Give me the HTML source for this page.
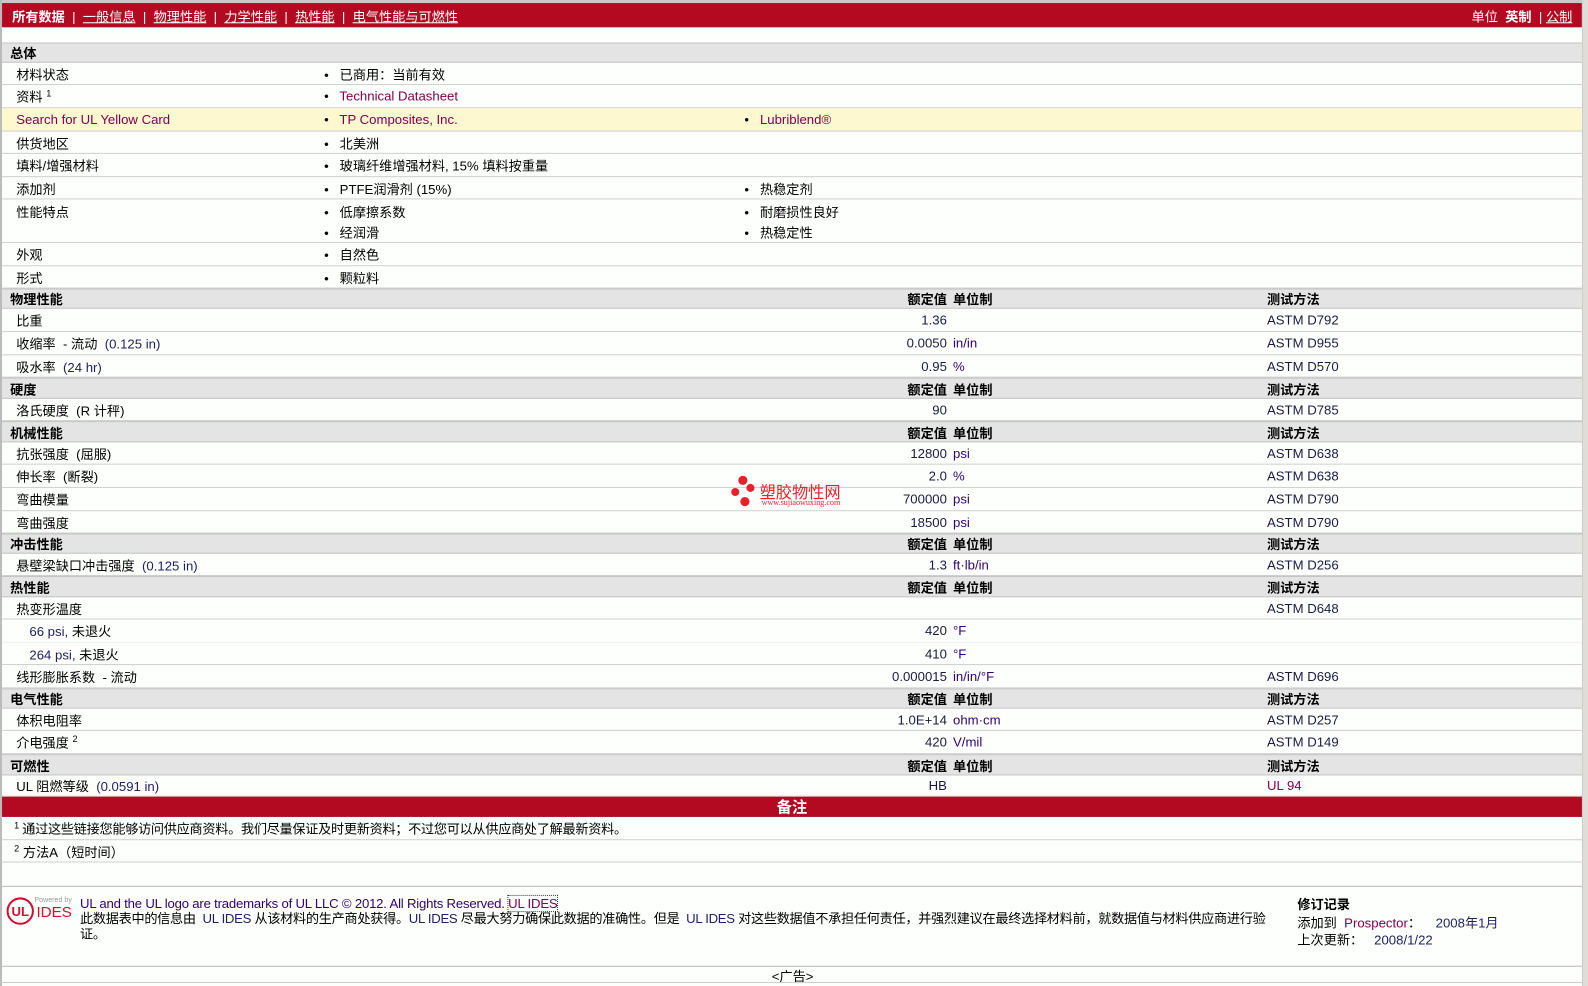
<!DOCTYPE html>
<html><head><meta charset="utf-8"><style>
*{margin:0;padding:0;box-sizing:border-box}
body{width:1588px;height:986px;background:#fdfffd;overflow:hidden;margin:0}
#w{width:1568px;height:974px;position:relative;transform:scale(1.01276,1.01232);transform-origin:0 0;font-family:"Liberation Sans","Noto Sans CJK SC",sans-serif;font-size:13px;color:#000}
.a{position:absolute;white-space:nowrap}
.r{position:absolute;left:2px;width:1560px;border-bottom:1px solid #cfcfcf}
.h{background:#e4e4e4;border-top:1px solid #c4c4c4;border-bottom:1px solid #c4c4c4;font-weight:bold}
.r span{position:absolute;white-space:nowrap;top:50%;transform:translateY(-50%)}
.l{left:14px}.hl{left:8px}
.b1{left:318px}.b2{left:733px}
.v{right:627px;text-align:right;color:#1a1a40}
.u{left:939px;color:#300070}
.t{left:1249px;color:#1a1a40}
.k{color:#800050}
.n{color:#202060}
.hv{right:627px}.hu{left:939px}.ht{left:1249px}
.cj{letter-spacing:-0.3px}
</style></head><body><div id="w">
<div class="a" style="left:0;top:0;width:1562px;height:3px;background:#c8c8c8"></div>
<div class="a" style="left:2px;top:3px;width:1560px;height:24px;background:#b30a22"></div>
<div class="a" style="left:12px;top:6px;color:#fff;font-size:13px"><b>所有数据</b> &nbsp;| &nbsp;<u>一般信息</u> &nbsp;| &nbsp;<u>物理性能</u> &nbsp;| &nbsp;<u>力学性能</u> &nbsp;| &nbsp;<u>热性能</u> &nbsp;| &nbsp;<u>电气性能与可燃性</u></div>
<div class="a" style="left:1453px;top:6px;color:#fff;font-size:13px">单位 &nbsp;<b>英制</b> &nbsp;| <u>公制</u></div>
<div class="a" style="left:0;top:0;width:2px;height:974px;background:#bbb"></div>
<div class="a" style="left:1562px;top:0;width:6px;height:974px;background:#e0ddd8;border-left:1px solid #ccc"></div>

<div class="r h" style="top:42px;height:20px"><span class="hl">总体</span></div>
<div class="r" style="top:62px;height:22px"><span class="l">材料状态</span><span class="b1">•&nbsp;&nbsp; 已商用：当前有效</span></div>
<div class="r" style="top:84px;height:23px"><span class="l">资料 <sup style="font-size:9px">1</sup></span><span class="b1">•&nbsp;&nbsp; <span class="k" style="position:static;transform:none">Technical Datasheet</span></span></div>
<div class="r" style="top:107px;height:23px;background:#fdf8d0"><span class="l k">Search for UL Yellow Card</span><span class="b1">•&nbsp;&nbsp; <span class="k" style="position:static;transform:none">TP Composites, Inc.</span></span><span class="b2">•&nbsp;&nbsp; <span class="k" style="position:static;transform:none">Lubriblend®</span></span></div>
<div class="r" style="top:130px;height:22px"><span class="l">供货地区</span><span class="b1">•&nbsp;&nbsp; 北美洲</span></div>
<div class="r" style="top:152px;height:23px"><span class="l">填料/增强材料</span><span class="b1">•&nbsp;&nbsp; 玻璃纤维增强材料, 15% 填料按重量</span></div>
<div class="r" style="top:175px;height:22px"><span class="l">添加剂</span><span class="b1">•&nbsp;&nbsp; PTFE润滑剂 (15%)</span><span class="b2">•&nbsp;&nbsp; 热稳定剂</span></div>
<div class="r" style="top:197px;height:43px"><span class="l" style="top:12px">性能特点</span><span class="b1" style="top:12px">•&nbsp;&nbsp; 低摩擦系数</span><span class="b1" style="top:32px">•&nbsp;&nbsp; 经润滑</span><span class="b2" style="top:12px">•&nbsp;&nbsp; 耐磨损性良好</span><span class="b2" style="top:32px">•&nbsp;&nbsp; 热稳定性</span></div>
<div class="r" style="top:240px;height:23px"><span class="l">外观</span><span class="b1">•&nbsp;&nbsp; 自然色</span></div>
<div class="r" style="top:263px;height:22px"><span class="l">形式</span><span class="b1">•&nbsp;&nbsp; 颗粒料</span></div>

<div class="r h" style="top:285px;height:20px"><span class="hl">物理性能</span><span class="hv">额定值</span><span class="hu">单位制</span><span class="ht">测试方法</span></div>
<div class="r" style="top:305px;height:23px"><span class="l">比重</span><span class="v">1.36</span><span class="t">ASTM D792</span></div>
<div class="r" style="top:328px;height:23px"><span class="l">收缩率 &nbsp;- 流动 &nbsp;<span class="n" style="position:static;transform:none">(0.125 in)</span></span><span class="v">0.0050</span><span class="u">in/in</span><span class="t">ASTM D955</span></div>
<div class="r" style="top:351px;height:22px"><span class="l">吸水率 &nbsp;<span class="n" style="position:static;transform:none">(24 hr)</span></span><span class="v">0.95</span><span class="u">%</span><span class="t">ASTM D570</span></div>
<div class="r h" style="top:373px;height:21px"><span class="hl">硬度</span><span class="hv">额定值</span><span class="hu">单位制</span><span class="ht">测试方法</span></div>
<div class="r" style="top:394px;height:22px"><span class="l">洛氏硬度 &nbsp;(R 计秤)</span><span class="v">90</span><span class="t">ASTM D785</span></div>
<div class="r h" style="top:416px;height:21px"><span class="hl">机械性能</span><span class="hv">额定值</span><span class="hu">单位制</span><span class="ht">测试方法</span></div>
<div class="r" style="top:437px;height:22px"><span class="l">抗张强度 &nbsp;(屈服)</span><span class="v">12800</span><span class="u">psi</span><span class="t">ASTM D638</span></div>
<div class="r" style="top:459px;height:23px"><span class="l">伸长率 &nbsp;(断裂)</span><span class="v">2.0</span><span class="u">%</span><span class="t">ASTM D638</span></div>
<div class="r" style="top:482px;height:23px"><span class="l">弯曲模量</span><span class="v">700000</span><span class="u">psi</span><span class="t">ASTM D790</span></div>
<div class="r" style="top:505px;height:22px"><span class="l">弯曲强度</span><span class="v">18500</span><span class="u">psi</span><span class="t">ASTM D790</span></div>
<div class="r h" style="top:527px;height:20px"><span class="hl">冲击性能</span><span class="hv">额定值</span><span class="hu">单位制</span><span class="ht">测试方法</span></div>
<div class="r" style="top:547px;height:22px"><span class="l">悬壁梁缺口冲击强度 &nbsp;<span class="n" style="position:static;transform:none">(0.125 in)</span></span><span class="v">1.3</span><span class="u">ft·lb/in</span><span class="t">ASTM D256</span></div>
<div class="r h" style="top:569px;height:21px"><span class="hl">热性能</span><span class="hv">额定值</span><span class="hu">单位制</span><span class="ht">测试方法</span></div>
<div class="r" style="top:590px;height:22px"><span class="l">热变形温度</span><span class="t">ASTM D648</span></div>
<div class="r" style="top:612px;height:23px;border-bottom-color:#eee"><span class="l" style="left:27px"><span class="n" style="position:static;transform:none">66 psi,</span> 未退火</span><span class="v">420</span><span class="u">°F</span></div>
<div class="r" style="top:635px;height:22px"><span class="l" style="left:27px"><span class="n" style="position:static;transform:none">264 psi,</span> 未退火</span><span class="v">410</span><span class="u">°F</span></div>
<div class="r" style="top:657px;height:23px"><span class="l">线形膨胀系数 &nbsp;- 流动</span><span class="v">0.000015</span><span class="u">in/in/°F</span><span class="t">ASTM D696</span></div>
<div class="r h" style="top:680px;height:20px"><span class="hl">电气性能</span><span class="hv">额定值</span><span class="hu">单位制</span><span class="ht">测试方法</span></div>
<div class="r" style="top:700px;height:22px"><span class="l">体积电阻率</span><span class="v">1.0E+14</span><span class="u">ohm·cm</span><span class="t">ASTM D257</span></div>
<div class="r" style="top:722px;height:23px"><span class="l">介电强度 <sup style="font-size:9px">2</sup></span><span class="v">420</span><span class="u">V/mil</span><span class="t">ASTM D149</span></div>
<div class="r h" style="top:745px;height:21px"><span class="hl">可燃性</span><span class="hv">额定值</span><span class="hu">单位制</span><span class="ht">测试方法</span></div>
<div class="r" style="top:766px;height:21px"><span class="l">UL 阻燃等级 &nbsp;<span class="n" style="position:static;transform:none">(0.0591 in)</span></span><span class="v">HB</span><span class="t k">UL 94</span></div>
<div class="r" style="top:787px;height:20px;background:#b30a22;border:0"><span style="left:0;width:100%;text-align:center;color:#fff;font-size:15px;font-weight:bold">备注</span></div>
<div class="r" style="top:807px;height:23px"><span class="l cj" style="left:12px"><sup style="font-size:9px">1</sup> 通过这些链接您能够访问供应商资料。我们尽量保证及时更新资料；不过您可以从供应商处了解最新资料。</span></div>
<div class="r" style="top:830px;height:22px"><span class="l" style="left:12px"><sup style="font-size:9px">2</sup> 方法A（短时间）</span></div>
<div class="r" style="top:852px;height:24px;border-bottom-color:#bbb"></div>
<div class="r" style="top:876px;height:79px;border-bottom-color:#bbb"></div>

<svg class="a" style="left:5px;top:885px" width="30" height="30" viewBox="0 0 30 30"><circle cx="15" cy="15" r="12.5" fill="none" stroke="#d0102e" stroke-width="2"/><text x="15" y="20" text-anchor="middle" font-family="Liberation Sans" font-weight="bold" font-size="13" fill="#d0102e">UL</text></svg>
<div class="a" style="left:34px;top:886px;font-size:7px;color:#999">Powered by</div>
<div class="a" style="left:36px;top:893px;font-size:15px;color:#d0102e">IDES</div>
<div class="a" style="left:79px;top:885px;color:#300070;letter-spacing:-0.2px">UL and the UL logo are trademarks of UL LLC © 2012. All Rights Reserved. <span style="color:#800050;outline:1px dotted #333">UL IDES</span></div>
<div class="a cj" style="left:79px;top:900px;white-space:normal;width:1185px;line-height:15px">此数据表中的信息由 &nbsp;<span class="n">UL IDES</span> 从该材料的生产商处获得。<span class="n">UL IDES</span> 尽最大努力确保此数据的准确性。但是 &nbsp;<span class="n">UL IDES</span> 对这些数据值不承担任何责任，并强烈建议在最终选择材料前，就数据值与材料供应商进行验证。</div>
<div class="a" style="left:1281px;top:883px;font-weight:bold;font-size:13px">修订记录</div>
<div class="a" style="left:1281px;top:901px">添加到 &nbsp;<span class="k">Prospector</span>： &nbsp; &nbsp;<span class="n">2008年1月</span></div>
<div class="a" style="left:1281px;top:918px">上次更新： &nbsp; <span class="n">2008/1/22</span></div>
<div class="a" style="left:762px;top:954px">&lt;广告&gt;</div>
<div class="a" style="left:0;top:970px;width:1562px;height:1px;background:#ccc"></div>

<div class="a" style="left:722px;top:470px;width:24px;height:32px">
<div class="a" style="left:7px;top:0;width:9px;height:9px;border-radius:50%;background:#e8202a"></div>
<div class="a" style="left:15px;top:8px;width:8px;height:8px;border-radius:50%;background:#e8202a"></div>
<div class="a" style="left:0;top:12px;width:8px;height:8px;border-radius:50%;background:#e8202a"></div>
<div class="a" style="left:9px;top:21px;width:9px;height:9px;border-radius:50%;background:#e8202a"></div>
</div>
<div class="a" style="left:750px;top:473px;font-size:16px;color:#e8202a">塑胶物性网</div>
<div class="a" style="left:752px;top:492px;font-size:8px;color:#e8202a;font-family:'Liberation Serif',serif">www.sujiaowuxing.com</div>
</div></body></html>
